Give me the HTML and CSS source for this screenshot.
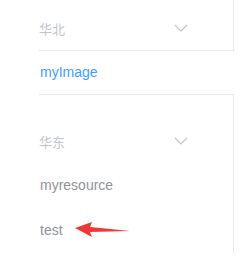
FILE: index.html
```html
<!DOCTYPE html>
<html lang="zh-CN">
<head>
	<meta charset="UTF-8">
	<title>资源</title>
	<link rel="stylesheet" href="styles.css">
</head>
<body>
	<div class="menu">
		<div class="group first">
			<div class="group-head">
				<span>华北</span>
				<svg class="arrow-down" width="14" height="8" viewBox="0 0 14 8"><polyline points="1,1 7,7 13,1" fill="none" stroke="#c0c4cc" stroke-width="1.2"/></svg>
			</div>
		</div>
		<div class="item active">myImage</div>
		<div class="group second">
			<div class="group-head">
				<span>华东</span>
				<svg class="arrow-down" width="14" height="8" viewBox="0 0 14 8"><polyline points="1,1 7,7 13,1" fill="none" stroke="#c0c4cc" stroke-width="1.2"/></svg>
			</div>
			<div class="item">myresource</div>
			<div class="item mark">test
				<svg class="pointer" width="58" height="18" viewBox="0 0 58 18"><polygon points="0,7 17,1 15,6 55,10 15,11 17,16" fill="#f23535"/></svg>
			</div>
		</div>
	</div>
</body>
</html>
```

FILE: styles.css
```css
*{
	margin: 0;
	padding: 0;
}
body{
	font-family: "Liberation Sans", "Noto Sans CJK SC", sans-serif;
	font-size: 14px;
	background: #fff;
}
.menu{
	width: 195px;
	margin-left: 39px;
}
.group{
	border-right: 1px solid #e6e6e6;
}
.group.first{
	padding-top: 6px;
	border-bottom: 1px solid #e6e6e6;
}
.group.second{
	padding-top: 24px;
	border-top: 1px solid #e6e6e6;
}
.group-head{
	display: flex;
	justify-content: space-between;
	align-items: center;
	height: 44px;
	padding-right: 45px;
	color: #c0c4cc;
	font-size: 13px;
}
.arrow-down{
	display: block;
}
.item{
	height: 45px;
	line-height: 45px;
	padding-left: 1px;
	color: #909399;
}
.item.active{
	height: 43px;
	line-height: 43px;
	color: #409eff;
}
.item.mark{
	position: relative;
}
.pointer{
	position: absolute;
	left: 36px;
	top: 13px;
}
```
